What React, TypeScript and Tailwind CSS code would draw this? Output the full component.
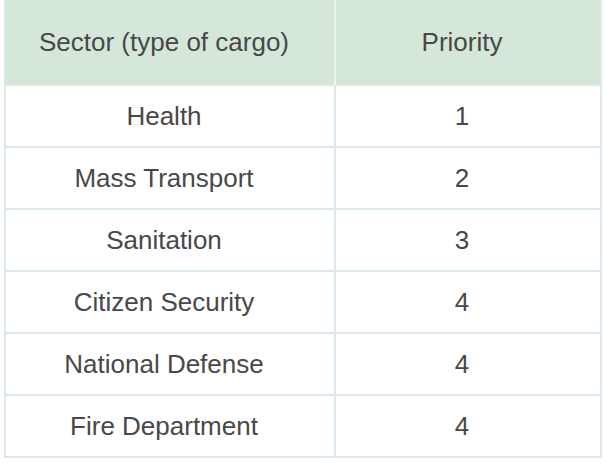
const rows = [
  { sector: 'Health', priority: 1 },
  { sector: 'Mass Transport', priority: 2 },
  { sector: 'Sanitation', priority: 3 },
  { sector: 'Citizen Security', priority: 4 },
  { sector: 'National Defense', priority: 4 },
  { sector: 'Fire Department', priority: 4 },
];

export default function App() {
  return (
    <div className="w-[605px] h-[466px] bg-white pl-[4px] pr-[3px] font-['Liberation_Sans',Arial,sans-serif] text-[26px] text-[#484848]">
      <table className="w-full border-collapse">
        <thead>
          <tr className="h-[85px] bg-[#d5e7d9]">
            <th className="w-[330px] pr-[12px] border-l-2 border-r-2 border-l-[#dcebdf] border-r-[#e9f3eb] font-normal">Sector (type of cargo)</th>
            <th className="pr-[12px] border-r-2 border-[#dcebdf] font-normal">Priority</th>
          </tr>
        </thead>
        <tbody>
          {rows.map((r) => (
            <tr key={r.sector} className="h-[62px]">
              <td className="pr-[12px] border-2 border-[#dcebdf] text-center">{r.sector}</td>
              <td className="pr-[12px] border-2 border-[#dcebdf] text-center">{r.priority}</td>
            </tr>
          ))}
        </tbody>
      </table>
    </div>
  );
}
